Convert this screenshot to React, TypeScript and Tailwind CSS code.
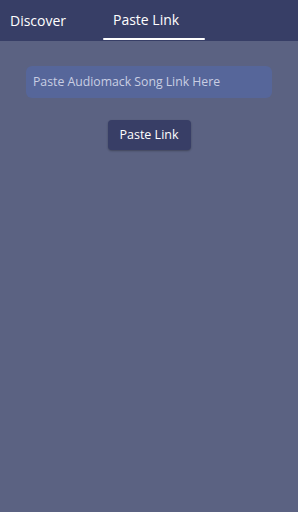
export default function App() {
  return (
    <div className="w-[298px] h-[512px] bg-[#5b6282] flex flex-col" style={{ fontFamily: '"Open Sans", "DejaVu Sans", sans-serif' }}>
      <div className="h-[41px] bg-[#373e66] flex items-stretch text-white text-[14px]">
        <div className="w-[103px] flex items-center pl-[10px]">Discover</div>
        <div className="w-[102px] flex flex-col justify-end">
          <div className="flex-1 flex items-center pl-[10px]">Paste Link</div>
          <div className="h-[2px] w-full bg-white rounded-full mb-[1px]"></div>
        </div>
      </div>
      <div className="px-[26px] pt-[25px]">
        <div className="h-[32px] rounded-[6px] bg-[#56669a] flex items-center px-[7px] text-[12.25px] text-[#c9cee3]">
          Paste Audiomack Song Link Here
        </div>
      </div>
      <div className="flex justify-center pt-[22px]">
        <div className="w-[83px] h-[30px] rounded-[4px] bg-[#383e66] shadow-[0_1px_2px_rgba(0,0,0,0.3)] flex items-center justify-center text-white text-[12.5px]">
          Paste Link
        </div>
      </div>
    </div>
  );
}
